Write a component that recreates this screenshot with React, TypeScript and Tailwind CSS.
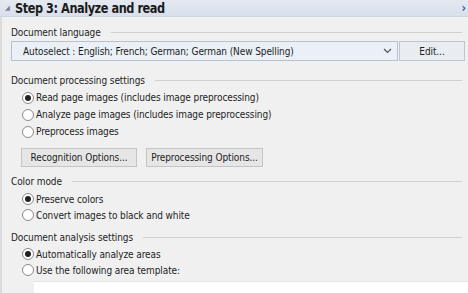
const font = { fontFamily: '"DejaVu Sans Condensed", "DejaVu Sans", sans-serif' };

function Section({ label, children }: { label: string; children?: React.ReactNode }) {
  return (
    <div>
      <div className="flex items-center h-[18px]">
        <span className="text-[10px] tracking-[-0.1px] text-[#1e1e1e] pr-[10px] whitespace-nowrap">{label}</span>
        <div className="flex-1 border-t border-[#d0d0d0]" />
      </div>
      {children}
    </div>
  );
}

function Radio({ label, checked, tall }: { label: string; checked?: boolean; tall?: boolean }) {
  return (
    <div className={`flex items-center gap-[2px] ${tall ? "h-[17px]" : "h-[16px]"}`}>
      <span className="w-[12px] h-[12px] rounded-full border border-[#8a8a8a] bg-white flex items-center justify-center">
        {checked && <span className="w-[6px] h-[6px] rounded-full bg-[#222]" />}
      </span>
      <span className="text-[10px] tracking-[-0.1px] text-[#1e1e1e] whitespace-nowrap">{label}</span>
    </div>
  );
}

function Btn({ label, className }: { label: string; className?: string }) {
  return (
    <div
      className={`flex items-center justify-center border text-[10px] tracking-[-0.1px] text-[#1e1e1e] whitespace-nowrap ${className ?? ""}`}
    >
      {label}
    </div>
  );
}

export default function App() {
  return (
    <div className="w-[468px] h-[293px] bg-[#f0f0f0] overflow-hidden flex flex-col" style={font}>
      {/* Step header */}
      <div className="h-[17px] flex items-center bg-gradient-to-b from-[#e4e9f1] to-[#d9e0eb] border-b border-[#cdd5e0]">
        <span className="text-[7px] text-[#7a8594] pl-[5px] pr-[5px]">◢</span>
        <div className="flex-1">
          <span className="inline-block origin-left scale-x-[0.9] text-[14px] leading-[16px] font-bold tracking-[-0.5px] text-[#1b1b1b] whitespace-nowrap">
            Step 3: Analyze and read
          </span>
        </div>
        <span className="text-[12px] leading-[14px] text-[#2a5fa8] pr-[2px] font-bold">›</span>
      </div>

      <div className="flex-1 flex border-l-2 border-[#dcdcdc]">
        <div className="flex-1 pl-[9px] pr-[6px] pt-[6px] flex flex-col">
          <Section label="Document language" />
          <div className="flex gap-[1px] mr-[-3px]">
            <div className="flex-1 h-[20px] border border-[#b9c2cc] bg-[#eaf0f6] flex items-center pl-[11px] pr-[4px]">
              <span className="text-[10px] tracking-[-0.1px] text-[#1e1e1e] flex-1 whitespace-nowrap">
                Autoselect : English; French; German; German (New Spelling)
              </span>
              <svg width="9" height="6" viewBox="0 0 9 6" className="mr-[1px]">
                <path d="M1 1 L4.5 4.5 L8 1" stroke="#555" strokeWidth="1.2" fill="none" />
              </svg>
            </div>
            <Btn label="Edit..." className="w-[66px] h-[20px] bg-[#e9edf1] border-[#b9c6d4]" />
          </div>

          <div className="mt-[10px]">
            <Section label="Document processing settings">
              <div className="pl-[11px]">
                <Radio label="Read page images (includes image preprocessing)" checked tall />
                <Radio label="Analyze page images (includes image preprocessing)" tall />
                <Radio label="Preprocess images" tall />
              </div>
              <div className="flex gap-[9px] pl-[10px] mt-[8px]">
                <Btn label="Recognition Options..." className="w-[116px] h-[19px] bg-[#e6e6e6] border-[#c4c4c4]" />
                <Btn label="Preprocessing Options..." className="w-[117px] h-[19px] bg-[#e6e6e6] border-[#c4c4c4]" />
              </div>
            </Section>
          </div>

          <div className="mt-[5px]">
            <Section label="Color mode">
              <div className="pl-[11px] pt-[1px]">
                <Radio label="Preserve colors" checked />
                <Radio label="Convert images to black and white" />
              </div>
            </Section>
          </div>

          <div className="mt-[5px]">
            <Section label="Document analysis settings">
              <div className="pl-[11px]">
                <Radio label="Automatically analyze areas" checked />
                <Radio label="Use the following area template:" />
              </div>
            </Section>
          </div>
          <div className="flex-1 ml-[23px] mr-[-6px] mt-[3px] bg-white border-t border-[#e4e4e4]" />
        </div>
      </div>
    </div>
  );
}
